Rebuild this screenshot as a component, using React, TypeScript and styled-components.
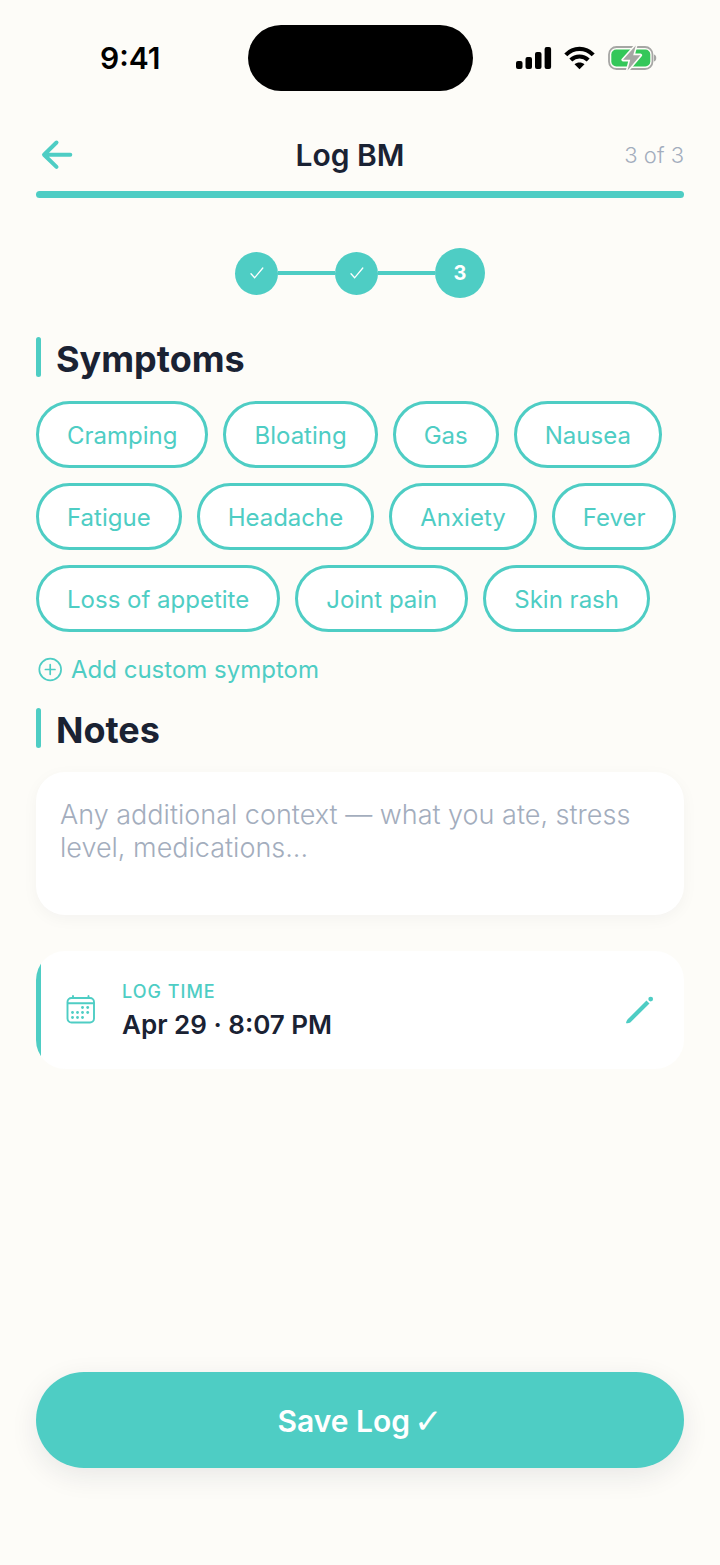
import React, { useState } from "react";
import styled, { createGlobalStyle } from "styled-components";

const color = {
  page: "#fdfcf8",
  teal: "#4ecdc4",
  ink: "#1a2233",
  muted: "#a3adbd",
  card: "#ffffff",
};

const GlobalStyle = createGlobalStyle`
  *, *::before, *::after { box-sizing: border-box; }
  body {
    margin: 0;
    background: ${color.page};
    color: ${color.ink};
    font-family: Inter, "Liberation Sans", sans-serif;
  }
  button, textarea { font: inherit; }
`;

const Screen = styled.div`
  display: flex;
  flex-direction: column;
  min-height: 100vh;
  background: ${color.page};
`;

const StatusBar = styled.div`
  display: grid;
  grid-template-columns: 1fr auto 1fr;
  align-items: center;
  padding-top: 25px;
`;

const Clock = styled.time`
  padding-left: 100px;
  font-size: 30px;
  line-height: 36px;
  font-weight: 600;
  color: #000;
`;

const Island = styled.div`
  width: 225px;
  height: 66px;
  border-radius: 33px;
  background: #000;
`;

const StatusIcons = styled.div`
  display: flex;
  align-items: center;
  justify-content: flex-end;
  gap: 12px;
  padding-right: 63px;
`;

const Main = styled.main`
  display: flex;
  flex: 1;
  flex-direction: column;
  padding: 41px 36px 97px;
`;

const Header = styled.header`
  display: grid;
  grid-template-columns: 1fr auto 1fr;
  align-items: center;
  height: 46px;
`;

const BackButton = styled.button`
  justify-self: start;
  display: flex;
  padding: 4px;
  border: 0;
  background: none;
  color: ${color.teal};
  cursor: pointer;
`;

const Title = styled.h1`
  margin: 0;
  padding-right: 20px;
  font-size: 30px;
  line-height: 40px;
  font-weight: 600;
`;

const StepCount = styled.span`
  justify-self: end;
  font-size: 22px;
  line-height: 32px;
  font-weight: 300;
  color: ${color.muted};
`;

const Progress = styled.div`
  height: 7px;
  margin-top: 13px;
  border-radius: 4px;
  background: ${color.teal};
`;

const Steps = styled.ol`
  display: flex;
  align-items: center;
  justify-content: center;
  margin: 50px 0 39px;
  padding: 0;
  list-style: none;
`;

const Step = styled.li<{ $current?: boolean }>`
  display: flex;
  align-items: center;
  justify-content: center;
  width: ${(p) => (p.$current ? 50 : 43)}px;
  height: ${(p) => (p.$current ? 50 : 43)}px;
  border-radius: 50%;
  background: ${color.teal};
  color: #fff;
  font-size: 20px;
  line-height: 24px;
  font-weight: 700;
`;

const StepLine = styled.li`
  width: 57px;
  height: 4px;
  background: ${color.teal};
`;

const SectionTitle = styled.h2`
  display: flex;
  gap: 15px;
  height: 40px;
  margin: 0 0 24px;
  font-size: 36px;
  line-height: 44px;
  font-weight: 700;

  &::before {
    content: "";
    width: 5px;
    height: 40px;
    border-radius: 3px;
    background: ${color.teal};
  }
`;

const Chips = styled.div`
  display: flex;
  flex-wrap: wrap;
  gap: 15px;
`;

const Chip = styled.button<{ $on: boolean }>`
  height: 67px;
  padding: 2px 28px 0;
  border: 3px solid ${color.teal};
  border-radius: 34px;
  background: ${(p) => (p.$on ? color.teal : color.card)};
  color: ${(p) => (p.$on ? "#fff" : color.teal)};
  font-size: 24px;
  line-height: 30px;
  cursor: pointer;
`;

const AddButton = styled.button`
  display: flex;
  align-items: center;
  align-self: flex-start;
  gap: 8px;
  margin: 22px 0;
  padding: 0 2px;
  border: 0;
  background: none;
  color: ${color.teal};
  font-size: 24px;
  line-height: 32px;
  cursor: pointer;
`;

const NotesBox = styled.textarea`
  display: block;
  width: 100%;
  height: 143px;
  padding: 26px 24px;
  border: 0;
  border-radius: 29px;
  outline: 0;
  resize: none;
  background: ${color.card};
  box-shadow: 0 4px 16px rgba(26, 34, 51, 0.04);
  color: ${color.ink};
  font-size: 27px;
  line-height: 33px;
  font-weight: 300;

  &::placeholder {
    color: ${color.muted};
    opacity: 1;
  }
`;

const TimeCard = styled.section`
  display: flex;
  align-items: center;
  gap: 26px;
  height: 118px;
  margin-top: 36px;
  padding: 0 28px 0 30px;
  border-radius: 29px;
  background: linear-gradient(to right, ${color.teal} 5px, ${color.card} 5px);
`;

const TimeText = styled.div`
  display: flex;
  flex: 1;
  flex-direction: column;
  gap: 2px;
`;

const TimeLabel = styled.span`
  font-size: 18px;
  line-height: 28px;
  font-weight: 500;
  letter-spacing: 1px;
  color: ${color.teal};
`;

const TimeValue = styled.time`
  font-size: 26px;
  line-height: 34px;
  font-weight: 600;
`;

const EditButton = styled.button`
  display: flex;
  padding: 0;
  border: 0;
  background: none;
  color: ${color.teal};
  cursor: pointer;
`;

const SaveButton = styled.button`
  display: flex;
  align-items: center;
  justify-content: center;
  gap: 4px;
  height: 96px;
  margin-top: auto;
  padding: 2px 24px 0;
  border: 0;
  border-radius: 48px;
  background: ${color.teal};
  box-shadow: 0 8px 28px rgba(26, 34, 51, 0.09);
  color: #fff;
  font-size: 30px;
  line-height: 40px;
  font-weight: 600;
  cursor: pointer;
`;

const CheckGlyph = styled.span`
  font-family: "DejaVu Sans", sans-serif;
  font-size: 34px;
  font-weight: 400;
`;

const SignalIcon = () => (
  <svg width="36" height="24" viewBox="0 0 36 24" aria-hidden="true">
    <rect x="0" y="15" width="6.5" height="8" rx="2" />
    <rect x="9.500" y="11" width="6.5" height="12" rx="2" />
    <rect x="19" y="6" width="6.5" height="17" rx="2" />
    <rect x="28.600" y="1" width="6.5" height="22" rx="2" />
  </svg>
);

const WifiIcon = () => (
  <svg width="31" height="24" viewBox="0 0 31 24" aria-hidden="true">
    <g fill="none" stroke="#000" strokeWidth="4.2">
      <path d="M1.800 8.900C9.500 .9 21.500 .9 29.200 8.900" />
      <path d="M6.800 14.100c5-4.800 12.400-4.800 17.400 0" />
    </g>
    <path d="M15.500 23.200l-5-5c2.900-2.400 7.100-2.400 10 0z" />
  </svg>
);

const BatteryIcon = () => (
  <svg width="50" height="28" viewBox="0 0 50 28" aria-hidden="true">
    <rect x="2" y="3" width="43.500" height="22" rx="7.500" fill="none" stroke="#a6a6a4" strokeWidth="1.800" />
    <path d="M47 10.500c3 .8 3 6.200 0 7z" fill="#a6a6a4" />
    <rect x="4.300" y="5.500" width="39" height="17" rx="5" fill="#34c759" />
    <path
      d="M28.800 1.500L16 15.800h7.200l-2.700 10.700 13-15.300h-7.300z"
      fill="#a6a6a4"
      stroke={color.page}
      strokeWidth="3.200"
      strokeLinejoin="round"
      paintOrder="stroke"
    />
  </svg>
);

const BackIcon = () => (
  <svg width="34" height="32" viewBox="0 0 34 32" aria-hidden="true">
    <path
      d="M16.500 3.500L4 15.700l12.500 12.200M4.500 15.700H30.300"
      fill="none"
      stroke="currentColor"
      strokeWidth="4"
      strokeLinecap="round"
      strokeLinejoin="round"
    />
  </svg>
);

const StepCheck = () => (
  <svg width="14" height="12" viewBox="0 0 14 12" role="img" aria-label="Done">
    <path d="M1 6.800l3.600 4L12.800 1" fill="none" stroke="#fff" strokeWidth="1.300" strokeLinecap="round" />
  </svg>
);

const PlusCircleIcon = () => (
  <svg width="25" height="26" viewBox="0 0 25 26" aria-hidden="true">
    <g fill="none" stroke="currentColor" strokeWidth="1.700" strokeLinecap="round">
      <circle cx="12.200" cy="12.500" r="10.900" />
      <path d="M12.200 7.700v9.600M7.400 12.500h9.600" />
    </g>
  </svg>
);

const dots = [
  [16.5, 12.5], [21.7, 12.5],
  [6.5, 17.5], [11.5, 17.5], [16.5, 17.5], [21.7, 17.5],
  [6.5, 22.5], [11.5, 22.5], [16.5, 22.5],
];

const CalendarIcon = () => (
  <svg width="30" height="30" viewBox="0 0 30 30" aria-hidden="true" color={color.teal}>
    <g fill="none" stroke="currentColor" strokeWidth="1.900" strokeLinecap="round">
      <rect x="1.500" y="3" width="26.500" height="24.500" rx="4" />
      <path d="M2 8.200h25.500M7 1v2M22.500 1v2" />
    </g>
    <g fill="currentColor">
      {dots.map(([x, y]) => (
        <circle key={`${x}-${y}`} cx={x} cy={y} r="1.400" />
      ))}
    </g>
  </svg>
);

const PencilIcon = () => (
  <svg width="32" height="32" viewBox="0 0 32 32" aria-hidden="true" fill="currentColor">
    <path d="M2.200 29.200c-.5-.5.800-3 1.500-3.900L22.500 6.500l3 3L6.600 28.200c-1 .8-3.900 1.500-4.400 1z" />
    <circle cx="26.700" cy="5.100" r="2.400" />
  </svg>
);

const symptoms = [
  "Cramping",
  "Bloating",
  "Gas",
  "Nausea",
  "Fatigue",
  "Headache",
  "Anxiety",
  "Fever",
  "Loss of appetite",
  "Joint pain",
  "Skin rash",
];

export default function App() {
  const [selected, setSelected] = useState<string[]>([]);
  const toggle = (name: string) =>
    setSelected((now) => (now.includes(name) ? now.filter((n) => n !== name) : [...now, name]));

  return (
    <Screen>
      <GlobalStyle />
      <StatusBar>
        <Clock>9:41</Clock>
        <Island />
        <StatusIcons>
          <SignalIcon />
          <WifiIcon />
          <BatteryIcon />
        </StatusIcons>
      </StatusBar>
      <Main>
        <Header>
          <BackButton type="button" aria-label="Back">
            <BackIcon />
          </BackButton>
          <Title>Log BM</Title>
          <StepCount>3 of 3</StepCount>
        </Header>
        <Progress role="progressbar" aria-label="Progress" aria-valuemin={0} aria-valuemax={3} aria-valuenow={3} />
        <Steps>
          <Step><StepCheck /></Step>
          <StepLine aria-hidden="true" />
          <Step><StepCheck /></Step>
          <StepLine aria-hidden="true" />
          <Step $current aria-current="step">3</Step>
        </Steps>

        <SectionTitle>Symptoms</SectionTitle>
        <Chips>
          {symptoms.map((name) => (
            <Chip
              key={name}
              type="button"
              $on={selected.includes(name)}
              aria-pressed={selected.includes(name)}
              onClick={() => toggle(name)}
            >
              {name}
            </Chip>
          ))}
        </Chips>
        <AddButton type="button">
          <PlusCircleIcon />
          Add custom symptom
        </AddButton>

        <SectionTitle id="notes-title">Notes</SectionTitle>
        <NotesBox
          aria-labelledby="notes-title"
          placeholder="Any additional context — what you ate, stress level, medications..."
        />

        <TimeCard>
          <CalendarIcon />
          <TimeText>
            <TimeLabel>LOG TIME</TimeLabel>
            <TimeValue>Apr 29 · 8:07 PM</TimeValue>
          </TimeText>
          <EditButton type="button" aria-label="Edit log time">
            <PencilIcon />
          </EditButton>
        </TimeCard>

        <SaveButton type="button">
          Save Log
          <CheckGlyph aria-hidden="true">✓</CheckGlyph>
        </SaveButton>
      </Main>
    </Screen>
  );
}
